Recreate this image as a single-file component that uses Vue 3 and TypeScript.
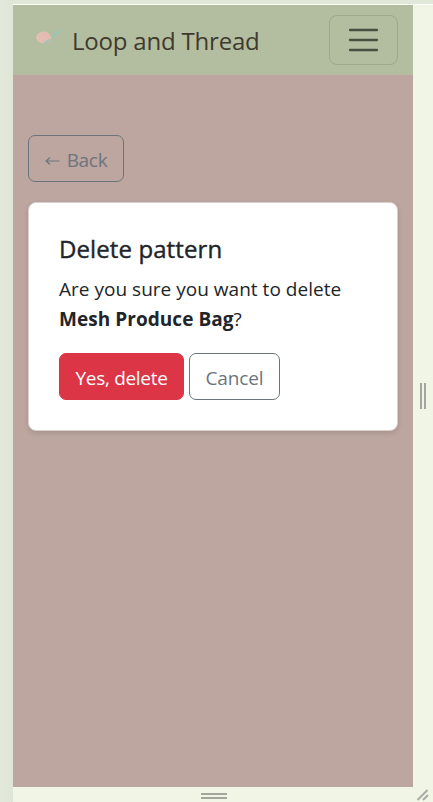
<script setup lang="ts">
import { ref } from 'vue'

const brand = ref('Loop and Thread')
const patternName = ref('Mesh Produce Bag')
</script>

<template>
  <div class="workspace">
    <div class="stage">
      <div class="device">
        <header class="navbar">
          <a class="brand">
            <svg class="logo" width="30" height="24" viewBox="0 0 30 24">
              <path d="M14 15Q15 17.500 18 18.500" fill="none" stroke="#c8bba6" stroke-width="1" />
              <ellipse cx="8.500" cy="12.500" rx="7.300" ry="5.900" fill="#e4bfb4" />
              <path d="M3 12Q6 7 11 8M4 15Q8 9 14 10M7 17Q9 12 15 12" fill="none" stroke="#dcaea5" stroke-width=".6" />
              <path d="M9 18L15 14.500M17 12.500L26 4.500" fill="none" stroke="#97c5b8" stroke-width="1.700" />
              <path d="M17 11.500L21 11L24 8" fill="none" stroke="#a2c3b2" stroke-width="1" />
            </svg>
            <span class="brand-text">{{ brand }}</span>
          </a>
          <button class="toggler" aria-label="Menu">
            <svg width="38" height="38" viewBox="0 0 38 38">
              <path d="M5 9h27M5 19h27M5 29h27" fill="none" stroke="#465041" stroke-width="2.300" stroke-linecap="round" />
            </svg>
          </button>
        </header>
        <main class="content">
          <button class="btn outline back"><svg class="arrow" width="15" height="10" viewBox="0 0 15 10"><path d="M5 1.500L1 5L5 8.500M1 5H14.500" fill="none" stroke="currentColor" stroke-width="1.100" /></svg><span>Back</span></button>
          <section class="card">
            <h1>Delete pattern</h1>
            <p><span class="question">Are you sure you want to delete</span><br><strong>{{ patternName }}</strong>?</p>
            <div class="actions">
              <button class="btn danger">Yes, delete</button>
              <button class="btn outline cancel">Cancel</button>
            </div>
          </section>
        </main>
      </div>
      <div class="side-handle"><i></i><i></i></div>
      <div class="bottom-handle"><i></i><i></i></div>
      <svg class="corner" width="14" height="14" viewBox="0 0 14 14">
        <path d="M1.500 12L11.500 2M7 12L12 7" stroke="#a8aca2" stroke-width="2" />
      </svg>
    </div>
  </div>
</template>

<style>
body { margin: 0; overflow: hidden; }
</style>

<style scoped>
* { box-sizing: border-box; }
.workspace {
  width: 433px;
  height: 802px;
  padding: 4px 0 0 13px;
  background: linear-gradient(90deg, #e3eadb 0, #dfe6d7 13px, #e1e8d8 14px);
  font-family: "Open Sans", "Noto Sans", sans-serif;
  color: #212529;
}
.stage {
  display: grid;
  grid-template-columns: 400px 20px;
  grid-template-rows: 782px 15px;
  border-top: 1px solid #fbfdf6;
  background: #f1f5e6;
}
.device { background: #bca69f; }
.navbar {
  display: flex;
  align-items: center;
  justify-content: space-between;
  height: 70px;
  padding: 0 15px 0 22px;
  background: #b3bea0;
}
.brand { display: flex; align-items: center; color: #403a2e; }
.logo { margin: -6px 7px 0 0; }
.brand-text { font-size: 24px; line-height: 36px; letter-spacing: -0.2px; white-space: nowrap; margin-top: 2px; }
.toggler {
  display: flex;
  align-items: center;
  justify-content: center;
  width: 69px;
  height: 50px;
  padding: 0;
  border: 1px solid #9da98b;
  border-radius: 8px;
  background: transparent;
}
.content { padding: 60px 15px 0; }
.btn {
  display: flex;
  align-items: center;
  justify-content: center;
  height: 47px;
  padding: 2px 0 0;
  border: 1px solid #6c757d;
  border-radius: 7px;
  font: 19px/30px "Open Sans", "Noto Sans", sans-serif;
  white-space: nowrap;
}
.outline { background: transparent; color: #6c757d; }
.back { width: 96px; gap: 7px; letter-spacing: -0.3px; }
.arrow { margin-top: 2px; }
.card {
  height: 229px;
  margin-top: 20px;
  padding: 30px 30px 0;
  border: 1px solid #d9d0cd;
  border-radius: 8px;
  background: #fff;
  box-shadow: 0 2px 5px rgba(60, 45, 45, .16);
}
h1 { margin: 0 0 10px; font-size: 24px; font-weight: 500; line-height: 31px; letter-spacing: 0.1px; -webkit-text-stroke: 0.4px currentColor; }
p { margin: 0 0 19px; font-size: 19px; line-height: 30px; white-space: nowrap; }
.question { letter-spacing: 0.02px; }
strong { font-weight: 700; letter-spacing: 0.05px; }
.actions { display: flex; gap: 5px; }
.danger { width: 125px; border-color: #dc3545; background: #dc3545; color: #fff; letter-spacing: -0.3px; }
.cancel { width: 91px; letter-spacing: -0.1px; }
.side-handle { display: flex; align-items: center; justify-content: center; gap: 2px; }
.side-handle i { width: 2px; height: 26px; background: #a3a69d; }
.bottom-handle { display: flex; flex-direction: column; align-items: center; justify-content: center; gap: 2px; padding: 3px 0 0 2px; }
.bottom-handle i { width: 26px; height: 2px; background: #a3a69d; }
.corner { margin: 1px 0 0 3px; }
</style>
